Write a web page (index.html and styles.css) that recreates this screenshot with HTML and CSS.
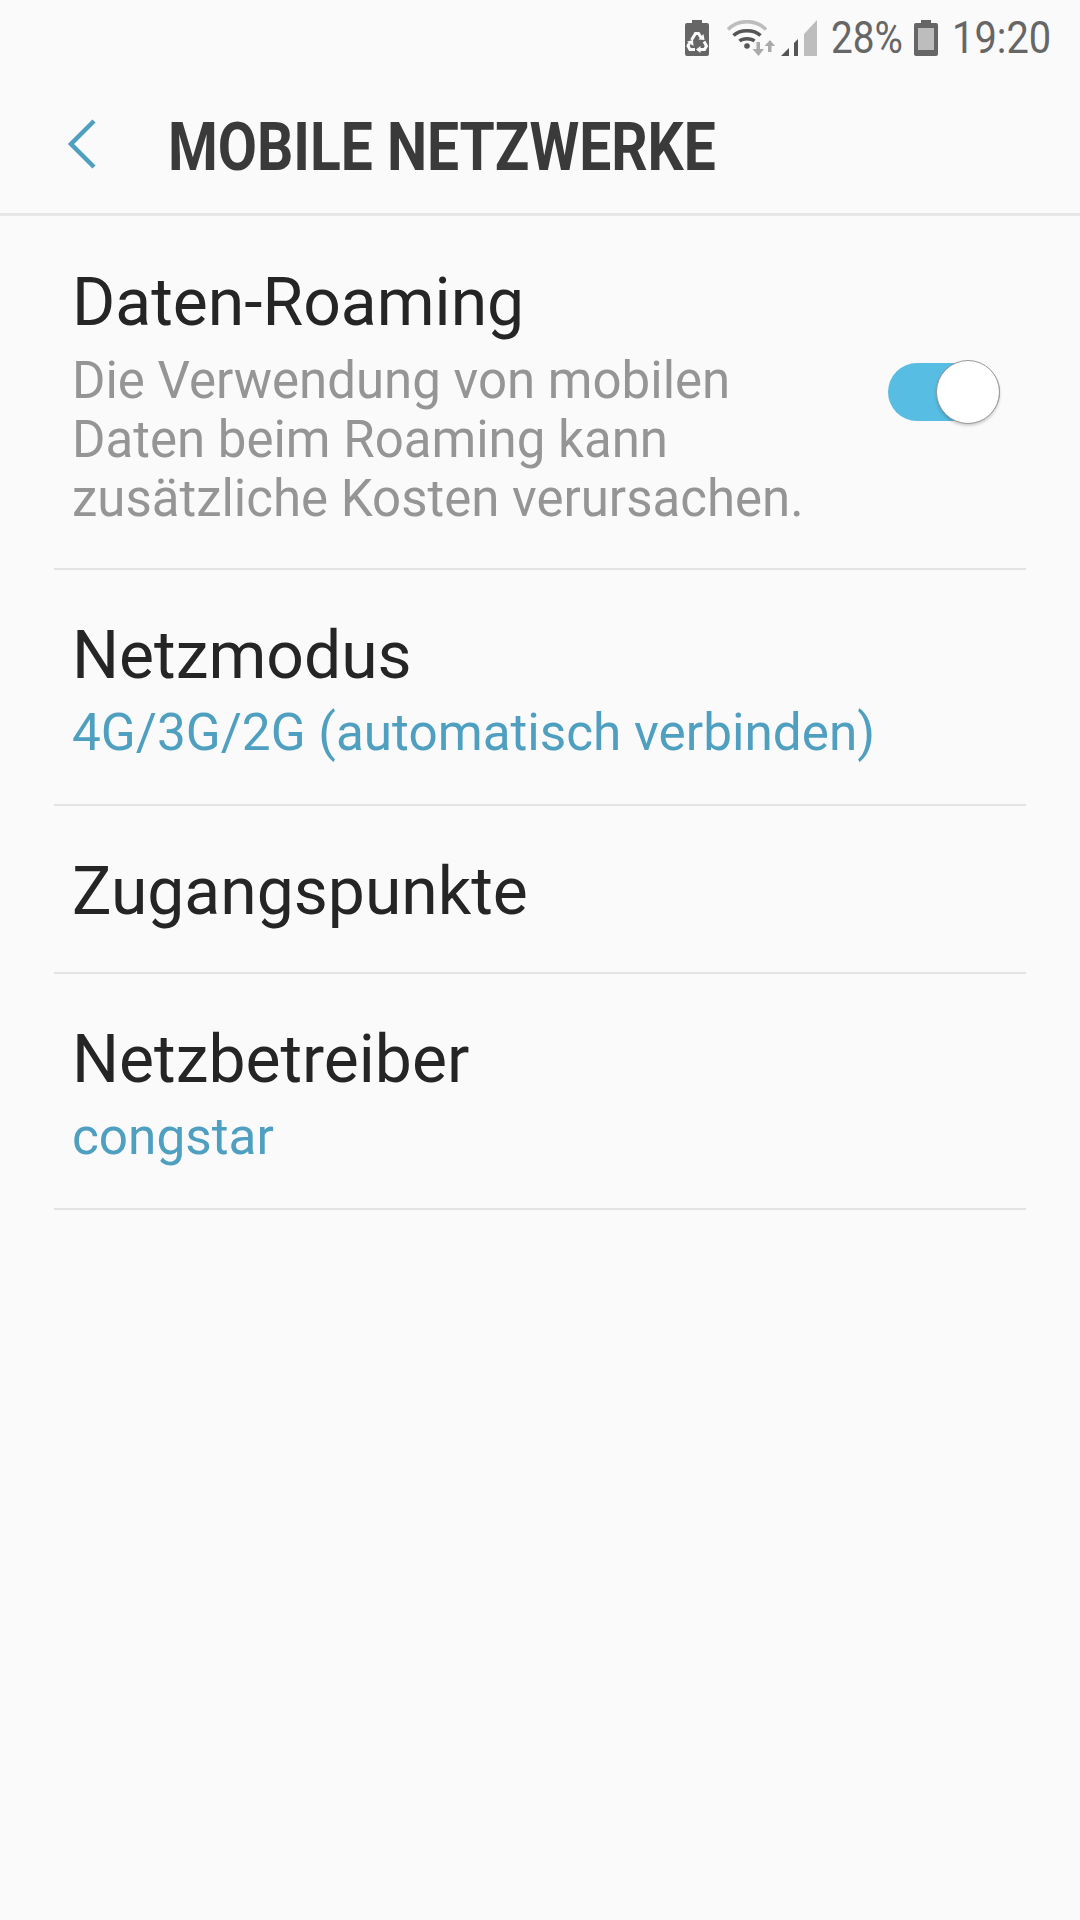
FILE: index.html
```html
<!DOCTYPE html>
<html lang="de">
<head>
<meta charset="utf-8">
<title>Mobile Netzwerke</title>
<link rel="stylesheet" href="styles.css">
</head>
<body>
<div class="status">
  <svg class="ic-recycle" width="24" height="36" viewBox="0 0 24 36"><path fill="#666" d="M7 0h10v3h5a2 2 0 0 1 2 2v29a2 2 0 0 1-2 2H2a2 2 0 0 1-2-2V5a2 2 0 0 1 2-2h5z"/><g fill="none" stroke="#fafafa" stroke-width="3"><path d="M6.500 20L10.500 13.500H13.500L16 17.500"/><path d="M19 21.500L21.500 26 19.500 29.500H15"/><path d="M10 29.500H5L3 26 4.500 23"/></g><path fill="#fafafa" d="M13.500 19.500L19.500 20 18.500 14zM15.500 26V33L11 29.500zM2 21.500L8 20 8.500 26z"/></svg>
  <svg class="ic-wifi" width="48" height="36" viewBox="0 0 48 36"><path d="M1 9.500C11 -1 29 -1 39 9.500" fill="none" stroke="#bdbdbd" stroke-width="3.500"/><path d="M6.500 15.500C13 9 27 9 33.500 15.500M12.500 21C16 18 24 18 27.500 21" fill="none" stroke="#555" stroke-width="3.500"/><circle cx="20" cy="26" r="2.800" fill="#555"/><path fill="#aaa" d="M29.500 22h3.500v7h4l-5.500 7-6-7h4zM43 20l5 6h-3.500v6h-3.500v-6h-3.500z"/></svg>
  <svg class="ic-signal" width="36" height="36" viewBox="0 0 36 36"><path fill="#555" d="M0 36l8-8v8zM13 36V23l4-4v17z"/><path fill="#bdbdbd" d="M23 14L36 0v36H23z"/></svg>
  <span class="st-text pct">28%</span>
  <svg class="ic-battery" width="24" height="36" viewBox="0 0 24 36"><path fill="#666" d="M7 0h10v3h5a2 2 0 0 1 2 2v29a2 2 0 0 1-2 2H2a2 2 0 0 1-2-2V5a2 2 0 0 1 2-2h5z"/><rect x="4" y="8" width="16" height="22" fill="#bdbdbd"/></svg>
  <span class="st-text time">19:20</span>
</div>
<header class="appbar">
  <svg class="back" width="30" height="50" viewBox="0 0 30 50"><path d="M27 2L4 25l23 23" fill="none" stroke="#4f9fc0" stroke-width="4.500"/></svg>
  <h1 class="title">MOBILE NETZWERKE</h1>
</header>
<main class="list">
  <div class="row row-switch">
    <div class="row-text">
      <div class="row-title">Daten-Roaming</div>
      <div class="row-desc">Die Verwendung von mobilen<br>Daten beim Roaming kann<br>zusätzliche Kosten verursachen.</div>
    </div>
    <div class="switch"><span class="knob"></span></div>
  </div>
  <div class="row">
    <div class="row-title">Netzmodus</div>
    <div class="row-value">4G/3G/2G (automatisch verbinden)</div>
  </div>
  <div class="row row-single">
    <div class="row-title">Zugangspunkte</div>
  </div>
  <div class="row">
    <div class="row-title">Netzbetreiber</div>
    <div class="row-value">congstar</div>
  </div>
</main>
</body>
</html>
```
FILE: styles.css
```css
* { box-sizing: border-box; }
html, body { margin: 0; height: 100%; }
body { background: #fafafa; font-family: Roboto, sans-serif; color: #252525; width: 1080px; height: 1920px; overflow: hidden; }
.status { height: 75px; display: flex; align-items: center; justify-content: flex-end; padding: 0 29px 0 0; }
.ic-recycle { margin-right: 18px; }
.ic-wifi { margin-right: 6px; }
.ic-signal { margin-right: 14px; }
.st-text { font-size: 45px; color: #666; display: inline-block; transform: scaleX(.86); transform-origin: left center; white-space: nowrap; }
.pct { width: 70px; }
.time { width: 99px; transform: scaleX(.885); }
.ic-battery { margin: 0 14px 0 13px; }
.appbar { height: 141px; display: flex; align-items: center; border-bottom: 3px solid #e6e6e6; padding: 0 0 0 67px; }
.back { margin-right: 71px; margin-top: -1px; }
.title { margin: 6px 0 0; font-size: 66px; font-weight: 700; color: #3a3a3a; white-space: nowrap; transform: scaleX(.862); transform-origin: left center; }
.list { padding: 0 54px 0 54px; }
.row { border-bottom: 2px solid #e3e3e3; padding: 12px 0 0 18px; height: 236px; display: flex; flex-direction: column; justify-content: center; }
.row-switch { height: 354px; flex-direction: row; align-items: center; justify-content: space-between; padding: 0 26px 0 18px; }
.row-text { padding-top: 6px; }
.row-single { height: 168px; padding-top: 6px; }
.row-title { font-size: 66px; line-height: 80px; }
.row-desc { font-size: 51px; line-height: 59px; color: #959595; margin-top: 8px; }
.row-value { font-size: 51.3px; line-height: 74px; color: #4f9fc0; }
.switch { position: relative; width: 112px; height: 58px; border-radius: 29px; background: #58bde3; margin-top: -1px; }
.knob { position: absolute; right: 0; top: -3px; width: 64px; height: 64px; border-radius: 50%; background: #fff; border: 1px solid #999; box-shadow: 0 2px 3px rgba(0,0,0,.18); }
```
